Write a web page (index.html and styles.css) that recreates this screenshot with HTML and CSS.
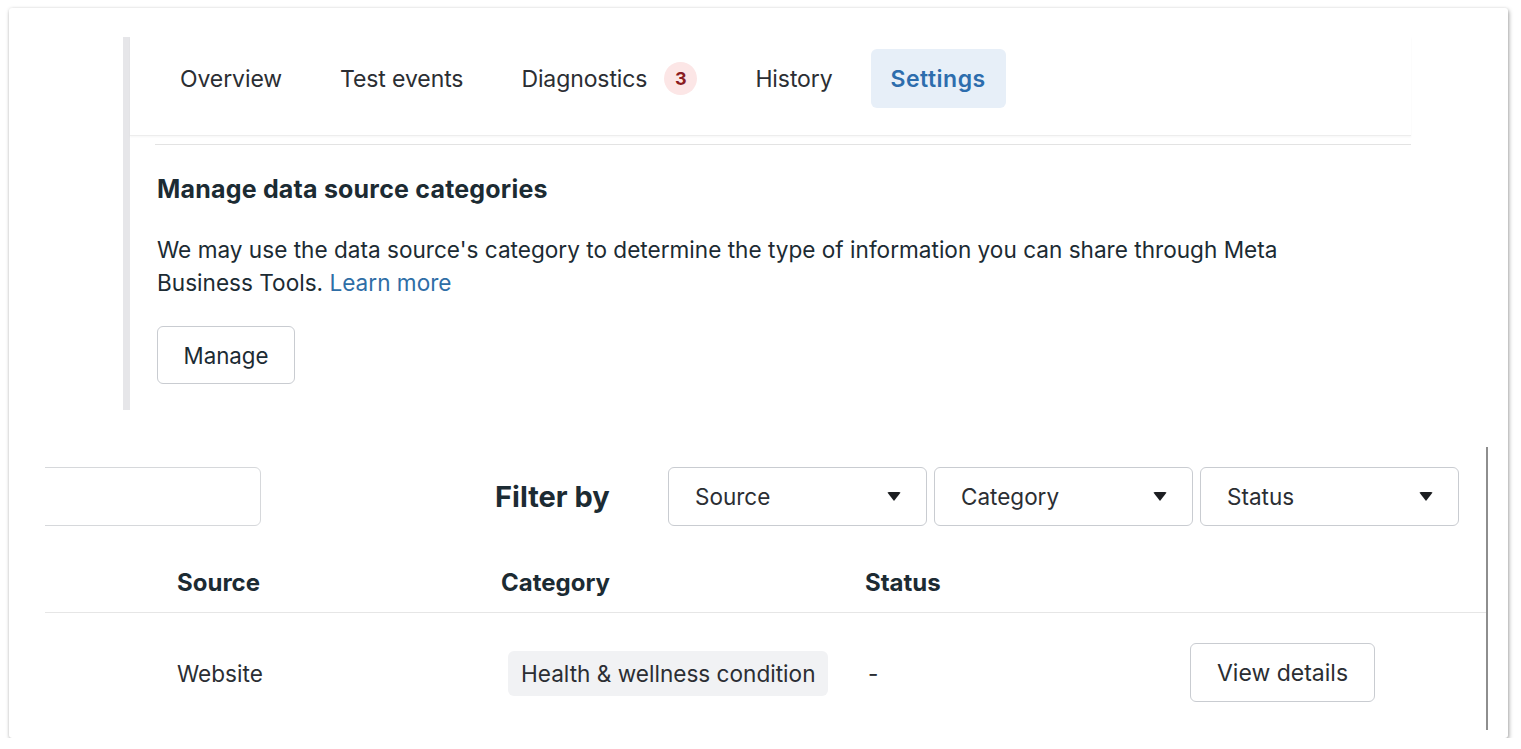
FILE: index.html
```html
<!DOCTYPE html>
<html>
<head>
<meta charset="utf-8">
<link rel="stylesheet" href="styles.css">
</head>
<body>
<div class="card">
  <div class="top">
    <div class="tabs">
      <div class="tab">Overview</div>
      <div class="tab">Test events</div>
      <div class="tab">Diagnostics <span class="badge">3</span></div>
      <div class="tab">History</div>
      <div class="tab active">Settings</div>
    </div>
    <div class="section">
      <h2 class="heading">Manage data source categories</h2>
      <p class="desc">We may use the data source's category to determine the type of information you can share through Meta Business Tools. <a class="link" href="#">Learn more</a></p>
      <button class="btn manage">Manage</button>
    </div>
  </div>
  <div class="bottom">
    <div class="filters">
      <div class="search"></div>
      <div class="filter-label">Filter by</div>
      <div class="dropdowns">
        <div class="dropdown"><span>Source</span><span class="caret"></span></div>
        <div class="dropdown"><span>Category</span><span class="caret"></span></div>
        <div class="dropdown"><span>Status</span><span class="caret"></span></div>
      </div>
    </div>
    <div class="thead">
      <div class="col">Source</div>
      <div class="col">Category</div>
      <div class="col">Status</div>
      <div class="col"></div>
    </div>
    <div class="trow">
      <div class="col">Website</div>
      <div class="col"><span class="pill">Health &amp; wellness condition</span></div>
      <div class="col dash">-</div>
      <div class="col"><button class="btn view">View details</button></div>
    </div>
  </div>
</div>
</body>
</html>
```
FILE: styles.css
```css
html, body {
  margin: 0;
  padding: 0;
  background: #ffffff;
}
body {
  padding: 8px 0 0 9px;
  font-family: Inter, "Noto Sans", sans-serif;
  color: #1c2b33;
}
.card {
  width: 1499px;
  height: 730px;
  background: #fff;
  border-radius: 3px;
  box-shadow: 1px 2px 4px rgba(0,0,0,0.35), 0 0 3px rgba(0,0,0,0.08);
  overflow: hidden;
  padding-top: 29px;
  box-sizing: border-box;
}
.top {
  margin-left: 114px;
  width: 1288px;
  height: 373px;
  border-left: 7px solid #e6e6e9;
  box-sizing: border-box;
}
.tabs {
  height: 99px;
  box-sizing: border-box;
  padding: 12px 0 0 30px;
  display: flex;
  gap: 18px;
  align-items: flex-start;
  border-bottom: 1px solid #ededed;
  box-shadow: 0 1px 2px rgba(0,0,0,0.04);
}
.tab {
  height: 59px;
  padding: 0 20px;
  display: flex;
  align-items: center;
  border-radius: 6px;
  font-family: Inter, sans-serif;
  font-size: 23px;
  color: #2b2e33;
  letter-spacing: -0.1px;
}
.tab.active {
  background: #e7eff8;
  color: #2d6dad;
  font-weight: 600;
  letter-spacing: 0.5px;
}
.badge {
  display: inline-flex;
  align-items: center;
  justify-content: center;
  width: 33px;
  height: 33px;
  border-radius: 50%;
  background: #fce6e6;
  color: #8a1c22;
  font-size: 18px;
  font-weight: 700;
  margin-left: 17px;
  letter-spacing: 0;
}
.section {
  margin: 8px 0 0 25px;
  border-top: 1px solid #e3e3e3;
  padding-top: 30px;
}
.heading {
  margin: 0;
  font-size: 25px;
  line-height: 29px;
  font-weight: 700;
  color: #1c2b33;
  margin-left: 2px;
  letter-spacing: 0.2px;
}
.desc {
  margin: 29px 0 0 2px;
  font-size: 22.6px;
  line-height: 33px;
  color: #1c2b33;
  width: 1160px;
}
.link {
  color: #2f6ea6;
  text-decoration: none;
}
.btn {
  background: #fff;
  border: 1px solid #c9ccd1;
  border-radius: 6px;
  color: #1c2b33;
  font-family: Inter, sans-serif;
}
.manage {
  margin: 27px 0 0 2px;
  width: 138px;
  height: 58px;
  font-size: 22.3px;
  display: block;
}
.bottom {
  margin: 37px 0 0 36px;
  width: 1443px;
  height: 283px;
  border-right: 2px solid #8e8e8e;
  box-sizing: border-box;
  overflow: hidden;
}
.filters {
  margin-top: 20px;
  height: 59px;
  display: flex;
  align-items: center;
}
.search {
  margin-left: -40px;
  width: 256px;
  height: 59px;
  border: 1px solid #d6d8db;
  border-radius: 6px;
  box-sizing: border-box;
  flex: none;
}
.filter-label {
  margin-left: 234px;
  font-size: 29px;
  font-weight: 700;
  color: #1c2b33;
  width: 173px;
  flex: none;
}
.dropdowns {
  display: flex;
  gap: 7px;
}
.dropdown {
  width: 259px;
  height: 59px;
  box-sizing: border-box;
  border: 1px solid #c9ccd1;
  border-radius: 6px;
  display: flex;
  align-items: center;
  justify-content: space-between;
  padding: 0 25px 0 26px;
  font-size: 22.5px;
  color: #2b2e33;
}
.caret {
  width: 0;
  height: 0;
  border-left: 7px solid transparent;
  border-right: 7px solid transparent;
  border-top: 9px solid #1c1e21;
  border-radius: 2px;
}
.thead, .trow {
  display: grid;
  grid-template-columns: 324px 364px 325px 1fr;
  padding-left: 132px;
  align-items: center;
}
.thead {
  margin-top: 26px;
  height: 60px;
  border-bottom: 1px solid #e6e6e6;
  font-size: 24px;
  font-weight: 700;
  color: #1c2b33;
}
.trow {
  height: 120px;
  font-size: 22.6px;
  color: #2b2e33;
}
.pill {
  display: inline-flex;
  align-items: center;
  height: 45px;
  padding: 0 13px;
  margin-left: 7px;
  background: #f1f2f4;
  border-radius: 6px;
}
.dash {
  padding-left: 3px;
}
.view {
  width: 185px;
  height: 59px;
  font-size: 23px;
  color: #2b2e33;
  margin-top: -1px;
}
```
